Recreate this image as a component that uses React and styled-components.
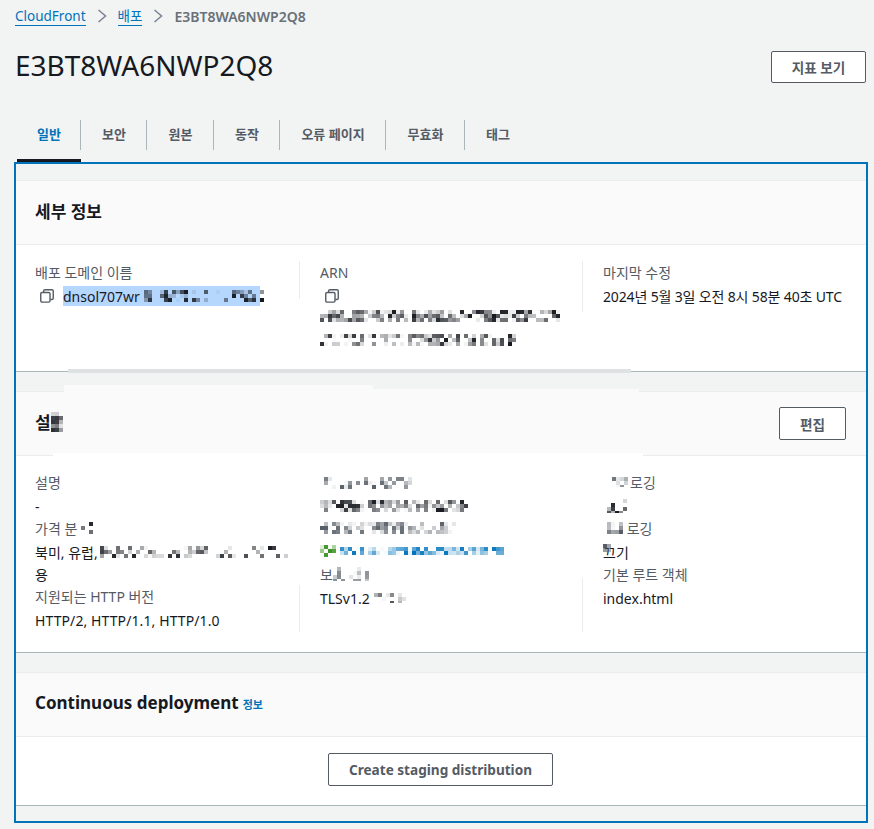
import React from "react";
import styled, { createGlobalStyle } from "styled-components";

const Global = createGlobalStyle`
  html, body { margin: 0; padding: 0; background: #f2f3f3; }
  body { font-family: "Noto Sans", "Noto Sans CJK KR", sans-serif; color: #16191f; font-size: 14px; }
  * { box-sizing: border-box; }
`;

const Page = styled.div`
  width: 874px;
  height: 829px;
  overflow: hidden;
`;
const Crumbs = styled.nav`
  display: flex;
  align-items: center;
  height: 32px;
  padding-left: 15px;
  font-size: 13.5px;
`;
const CrumbLink = styled.a`
  color: #0073bb;
  border-bottom: 1px solid #0073bb;
  line-height: 18px;
`;
const CrumbCurrent = styled.span`
  color: #687078;
  font-weight: 600;
  font-size: 14px;
`;
const CrumbSep = styled.svg`
  width: 10px;
  height: 14px;
  margin: 0 11px;
  color: #7d8998;
`;
const TitleRow = styled.header`
  display: flex;
  justify-content: space-between;
  align-items: center;
  margin-top: 19px;
  height: 31px;
  padding: 0 8px 0 15px;
`;
const Title = styled.h1`
  margin: -3px 0 0;
  font-size: 28px;
  font-weight: 400;
  line-height: 31px;
  color: #16191f;
`;
const Button = styled.button`
  height: ${p => p.$h || 32}px;
  width: ${p => p.$w}px;
  padding: 0;
  background: #fff;
  border: 1px solid #545b64;
  border-radius: 2px;
  color: #545b64;
  font: 700 13.6px "Noto Sans", "Noto Sans CJK KR", sans-serif;
`;
const Tabs = styled.div`
  display: flex;
  margin-top: 38px;
  height: 42px;
  padding-left: 17px;
`;
const Tab = styled.div`
  position: relative;
  width: ${p => p.$w}px;
  height: 42px;
  display: flex;
  justify-content: center;
  padding-top: 3px;
  line-height: 22px;
  font-weight: 700;
  font-size: 13px;
  color: ${p => (p.$active ? "#0073bb" : "#545b64")};
  border-bottom: ${p => (p.$active ? "3px solid #16191f" : "3px solid transparent")};
  &::after {
    content: "";
    display: ${p => (p.$last ? "none" : "block")};
    position: absolute;
    right: 0;
    top: 0;
    width: 1px;
    height: 30px;
    background: #aab7b8;
  }
`;
const Panel = styled.main`
  position: relative;
  margin-left: 14px;
  width: 854px;
  height: 661px;
  border: 2px solid #0073bb;
  padding-top: 16px;
  display: flex;
  flex-direction: column;
  gap: 19px;
`;
const Section = styled.section`
  background: #fff;
  border-top: 1px solid #eaeded;
  border-bottom: 1px solid #aab7b8;
`;
const SectionHead = styled.div`
  display: flex;
  justify-content: space-between;
  align-items: center;
  height: 64px;
  padding: 0 20px 0 19px;
  background: #fafafa;
  border-bottom: 1px solid #eaeded;
`;
const SectionTitle = styled.h2`
  margin: 0 0 4px;
  display: flex;
  align-items: center;
  font-size: 17px;
  font-weight: 700;
  color: #16191f;
`;
const InfoLink = styled.a`
  margin-left: 4px;
  padding-top: 2px;
  font-size: 11px;
  font-weight: 600;
  color: #0073bb;
`;
const Columns = styled.div`
  display: grid;
  grid-template-columns: 264px 283px 1fr;
  padding: ${p => p.$top}px 0 ${p => p.$bottom}px 19px;
`;
const Column = styled.div`
  position: relative;
  padding-left: ${p => (p.$first ? 0 : 21)}px;
  &::before {
    content: "";
    display: ${p => (p.$first ? "none" : "block")};
    position: absolute;
    left: 0;
    top: ${p => p.$ruleTop}px;
    height: ${p => p.$ruleH}px;
    width: 1px;
    background: #eaeded;
  }
`;
const Label = styled.div`
  display: flex;
  align-items: center;
  height: 22px;
  margin-bottom: 2px;
  color: #545b64;
  white-space: nowrap;
`;
const Value = styled.div`
  position: relative;
  display: flex;
  align-items: center;
  min-height: 22px;
  color: #16191f;
  white-space: nowrap;
  letter-spacing: ${p => p.$track || 0}px;
`;
const CopyIcon = styled.svg`
  width: 14px;
  height: 14px;
  margin-left: ${p => p.$ml || 0}px;
  margin-right: 9px;
  color: #545b64;
  flex: none;
`;
const Selection = styled.span`
  display: inline-flex;
  align-items: center;
  width: 197px;
  height: 20px;
  background: #b5d7fe;
`;
const MosaicBox = styled.svg`
  display: block;
  flex: none;
  margin-left: ${p => p.$ml || 0}px;
  margin-right: ${p => p.$mr || 0}px;
`;
const PlainRow = styled.div`
  display: flex;
  align-items: center;
  height: ${p => p.$h}px;
`;
const GlyphSmudge = styled.span`
  position: absolute;
  left: 0;
  top: 3px;
`;
const Patch = styled.div`
  position: absolute;
  left: ${p => p.$x - 16}px;
  top: ${p => p.$y - 164}px;
  width: ${p => p.$w}px;
  height: ${p => p.$h}px;
  background: ${p => p.$c};
`;
const Center = styled.div`
  display: flex;
  justify-content: center;
  padding: 16px 1px 19px 0;
`;

const TONES = { ink: [22, 25, 31], gray: [84, 91, 100], blue: [0, 115, 187], green: [29, 129, 2] };

function Mosaic({ w, h, seed, tone = "ink", fill = 0.6, cell = 4, ml, mr }) {
  let s = seed * 7919 + 13;
  const rnd = () => {
    s = (s + 0x6d2b79f5) | 0;
    let t = Math.imul(s ^ (s >>> 15), 1 | s);
    t = (t + Math.imul(t ^ (t >>> 7), 61 | t)) ^ t;
    return ((t ^ (t >>> 14)) >>> 0) / 4294967296;
  };
  const [r, g, b] = TONES[tone];
  const cells = [];
  for (let y = 0; y < h; y += cell) {
    for (let x = 0; x < w; x += cell) {
      if (rnd() < fill) {
        const a = Math.pow(rnd(), 1.15);
        cells.push(<rect key={x + "-" + y} x={x} y={y} width={cell} height={cell} fill={`rgba(${r},${g},${b},${a.toFixed(2)})`} />);
      }
    }
  }
  return <MosaicBox width={w} height={h} $ml={ml} $mr={mr}>{cells}</MosaicBox>;
}

const Copy = ({ ml }) => (
  <CopyIcon $ml={ml} viewBox="0 0 13 13" fill="none" stroke="currentColor" strokeWidth="1.3">
    <rect x="0.7" y="3.2" width="8.6" height="9" rx="1.2" />
    <path d="M3.4 3V1.9c0-.7.5-1.2 1.2-1.2h6.5c.7 0 1.2.5 1.2 1.2v6.6c0 .7-.5 1.2-1.2 1.2H9.6" />
  </CopyIcon>
);
const Chevron = () => (
  <CrumbSep viewBox="0 0 10 14" fill="none" stroke="currentColor" strokeWidth="1.6">
    <path d="M1.5 1L8.5 7l-7 6" />
  </CrumbSep>
);

export default function App() {
  return (
    <Page>
      <Global />
      <Crumbs>
        <CrumbLink>CloudFront</CrumbLink>
        <Chevron />
        <CrumbLink>배포</CrumbLink>
        <Chevron />
        <CrumbCurrent>E3BT8WA6NWP2Q8</CrumbCurrent>
      </Crumbs>
      <TitleRow>
        <Title>E3BT8WA6NWP2Q8</Title>
        <Button $w={95}>지표 보기</Button>
      </TitleRow>
      <Tabs>
        <Tab $w={64} $active>일반</Tab>
        <Tab $w={66}>보안</Tab>
        <Tab $w={67}>원본</Tab>
        <Tab $w={66}>동작</Tab>
        <Tab $w={106}>오류 페이지</Tab>
        <Tab $w={79}>무효화</Tab>
        <Tab $w={66} $last>태그</Tab>
      </Tabs>
      <Panel>
        <Section>
          <SectionHead><SectionTitle>세부 정보</SectionTitle></SectionHead>
          <Columns $top={16} $bottom={16}>
            <Column $first>
              <Label>배포 도메인 이름</Label>
              <Value>
                <Copy ml={5} />
                <Selection>
                  dnsol707wr
                  <Mosaic w={124} h={12} seed={3} fill={0.45} />
                </Selection>
              </Value>
            </Column>
            <Column $ruleTop={0} $ruleH={38}>
              <Label>ARN</Label>
              <Value><Copy ml={5} /></Value>
              <PlainRow $h={18}><Mosaic w={240} h={12} seed={11} fill={0.75} /></PlainRow>
              <PlainRow $h={30}><Mosaic w={196} h={12} seed={17} fill={0.65} /></PlainRow>
            </Column>
            <Column $ruleTop={0} $ruleH={51}>
              <Label>마지막 수정</Label>
              <Value $track={-0.15}>2024년 5월 3일 오전 8시 58분 40초 UTC</Value>
            </Column>
          </Columns>
        </Section>
        <Section>
          <SectionHead>
            <SectionTitle>설<Mosaic w={12} h={20} seed={5} fill={0.9} /></SectionTitle>
            <Button $w={67} $h={33}>편집</Button>
          </SectionHead>
          <Columns $top={15} $bottom={21}>
            <Column $first>
              <Label>설명</Label>
              <Value>-</Value>
              <Label>가격 분<Mosaic w={16} h={12} seed={7} fill={0.5} /></Label>
              <Value>북미, 유럽,<Mosaic w={188} h={12} seed={23} fill={0.38} ml={2} /></Value>
              <Value>용</Value>
              <Label>지원되는 HTTP 버전</Label>
              <Value $track={0.1}>HTTP/2, HTTP/1.1, HTTP/1.0</Value>
            </Column>
            <Column $ruleTop={114} $ruleH={47}>
              <PlainRow $h={23}><Mosaic w={92} h={12} seed={31} fill={0.55} tone="gray" /></PlainRow>
              <PlainRow $h={23}><Mosaic w={148} h={12} seed={37} fill={0.8} /></PlainRow>
              <PlainRow $h={22}><Mosaic w={136} h={12} seed={41} fill={0.65} tone="gray" /></PlainRow>
              <PlainRow $h={24}>
                <Mosaic w={16} h={12} seed={43} fill={0.7} tone="green" />
                <Mosaic w={164} h={8} seed={47} fill={0.8} tone="blue" ml={4} />
              </PlainRow>
              <Label>보<Mosaic w={36} h={14} seed={53} fill={0.5} tone="gray" /></Label>
              <Value>TLSv1.2<Mosaic w={36} h={10} seed={59} fill={0.4} /></Value>
            </Column>
            <Column $ruleTop={107} $ruleH={54}>
              <Label><Mosaic w={16} h={10} seed={61} fill={0.6} tone="gray" ml={9} mr={2} />로깅</Label>
              <PlainRow $h={22}><Mosaic w={20} h={14} seed={67} fill={0.5} ml={4} /></PlainRow>
              <Label><Mosaic w={16} h={12} seed={71} fill={0.8} tone="gray" ml={4} />&nbsp;로깅</Label>
              <Value>끄기<GlyphSmudge><Mosaic w={8} h={8} seed={73} fill={0.7} tone="gray" /></GlyphSmudge></Value>
              <Label>기본 루트 객체</Label>
              <Value>index.html</Value>
            </Column>
          </Columns>
        </Section>
        <Section>
          <SectionHead>
            <SectionTitle>Continuous deployment<InfoLink>정보</InfoLink></SectionTitle>
          </SectionHead>
          <Center><Button $w={225} $h={33}>Create staging distribution</Button></Center>
        </Section>
        <Patch $x={68} $y={369} $w={563} $h={4} $c="#dfe2e2" />
        <Patch $x={64} $y={385} $w={309} $h={7} $c="#fafafa" />
        <Patch $x={373} $y={389} $w={266} $h={3} $c="#fafafa" />
        <Patch $x={53} $y={453} $w={590} $h={3} $c="#ffffff" />
      </Panel>
    </Page>
  );
}
